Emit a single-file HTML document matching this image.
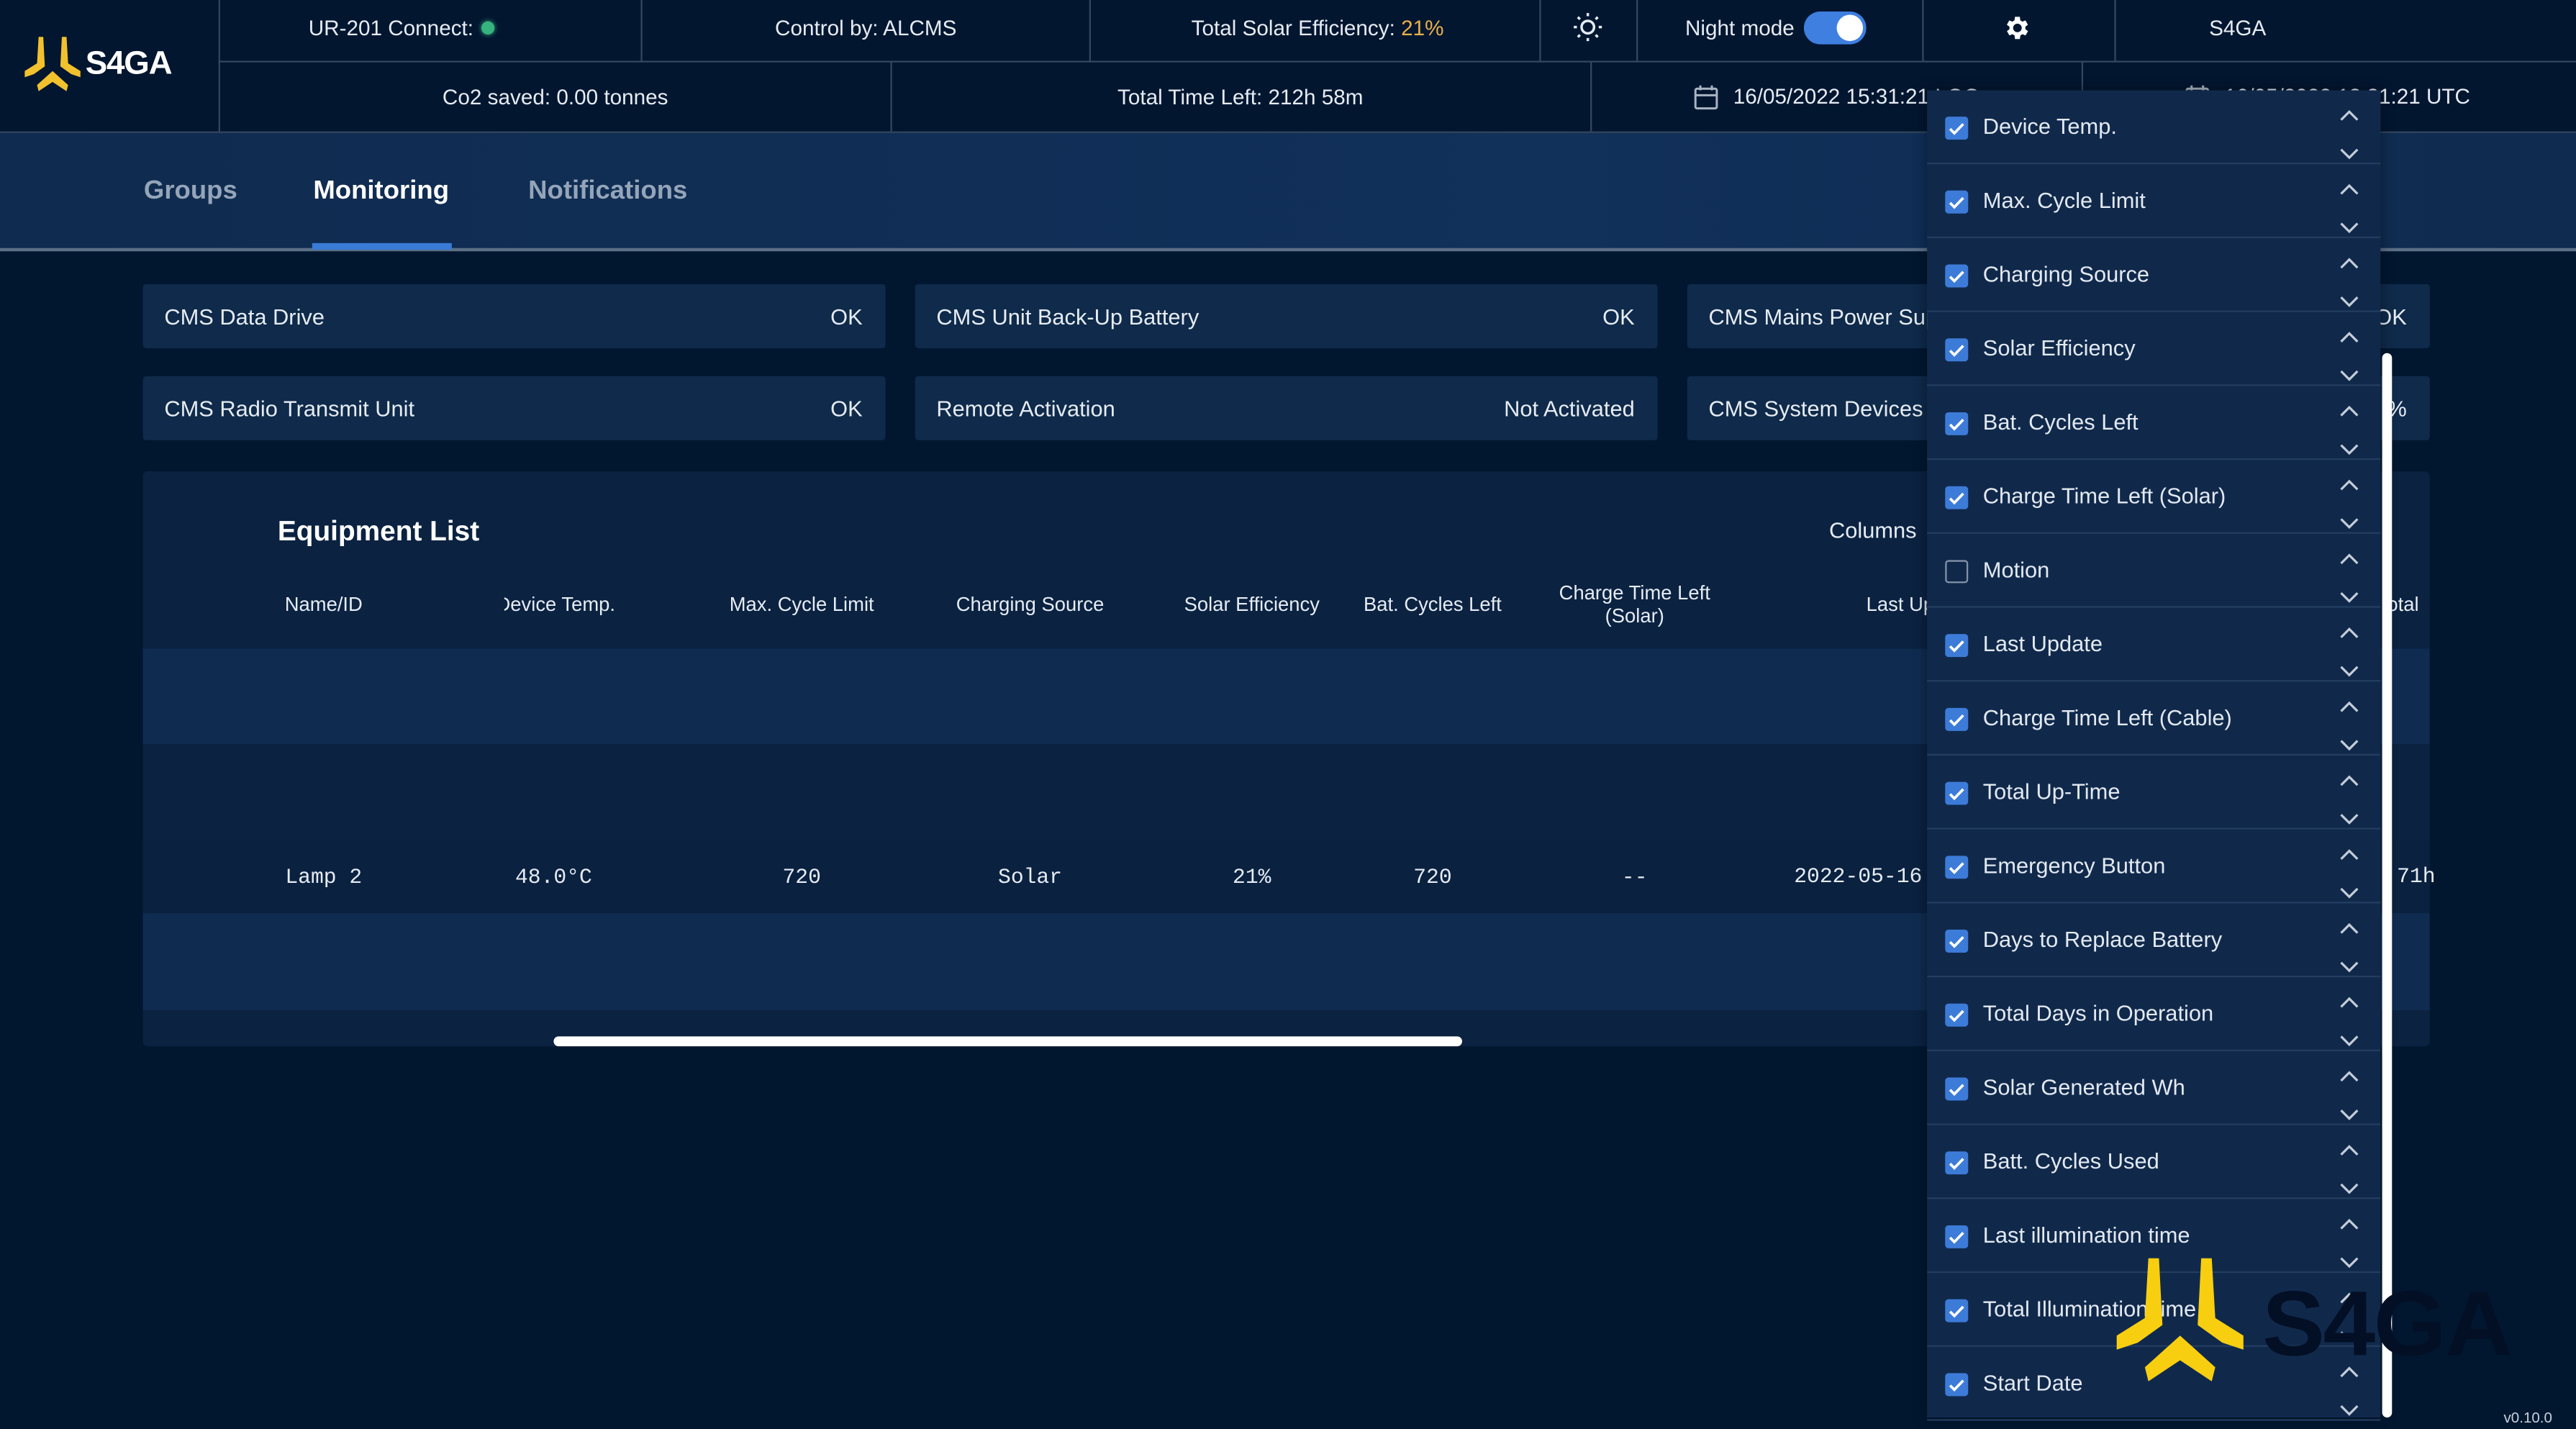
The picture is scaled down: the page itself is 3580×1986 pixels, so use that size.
<!DOCTYPE html>
<html><head><meta charset="utf-8"><style>
*{margin:0;padding:0;box-sizing:border-box}
html,body{width:3580px;height:1986px;overflow:hidden;background:#011730}
#w{position:absolute;left:0;top:0;width:1568px;height:870px;transform:scale(2.28316,2.28276);transform-origin:0 0;font-family:"Liberation Sans",sans-serif;color:#e6ecf3;background:#011730}
.a{position:absolute}
.t{position:absolute;font-size:13px;white-space:nowrap;transform:translate(-50%,-50%)}
.vl{position:absolute;width:1px;background:#33475f}
.card{position:absolute;height:39px;background:#0f2a4a;border-radius:2px;font-size:13.5px}
.card span{position:absolute;top:50%;transform:translateY(-50%)}
.mono{font-family:"Liberation Mono",monospace;font-size:13.5px}
.dd{position:absolute;left:1173px;top:55px;width:276px;height:808px;background:#10294b;box-shadow:0 0 8px rgba(0,0,0,.4)}
.row{position:absolute;left:0;width:276px;height:45px;border-bottom:1px solid #223d60}
.cb{position:absolute;left:11px;top:16px;width:14px;height:14px;background:#3d7bd8;border-radius:2px}
.cb svg{position:absolute;left:1px;top:1px}
.cbo{background:none;border:1.5px solid #8392a6}
.rl{position:absolute;left:34px;top:50%;transform:translateY(-50%);font-size:13.5px;color:#e3e9f1}
.ar{position:absolute;left:250px;width:14px;height:8px}
</style></head><body><div id="w">
<!-- header -->
<div class="a" style="left:0;top:0;width:1568px;height:80px;background:#031630"></div>
<div class="a" style="left:133px;top:37px;width:1435px;height:1px;background:#33475f"></div>
<div class="a" style="left:0;top:80px;width:1568px;height:1px;background:#33475f"></div>
<div class="vl" style="left:133px;top:0;height:80px"></div>
<div class="vl" style="left:390px;top:0;height:37px"></div>
<div class="vl" style="left:663px;top:0;height:37px"></div>
<div class="vl" style="left:937px;top:0;height:37px"></div>
<div class="vl" style="left:996px;top:0;height:37px"></div>
<div class="vl" style="left:1170px;top:0;height:37px"></div>
<div class="vl" style="left:1287px;top:0;height:37px"></div>
<div class="vl" style="left:542px;top:37px;height:43px"></div>
<div class="vl" style="left:968px;top:37px;height:43px"></div>
<div class="vl" style="left:1267px;top:37px;height:43px"></div>
<svg class="a" style="left:15px;top:22px" width="34" height="34" viewBox="0 0 36 35"><polygon points="9,0 12,0 13,19 6,24 0,26 0,22 8,17" fill="#f2c12e"/><polygon points="24,0 27,0 28,17 36,22 36,26 30,24 23,19" fill="#f2c12e"/><polygon points="18,22 28,31 27,35 18,29 9,35 8,31" fill="#f2c12e"/></svg>
<div class="a" style="left:52px;top:28px;font-size:20px;font-weight:bold;color:#fff;letter-spacing:-.5px">S4GA</div>
<div class="t" style="left:238px;top:17px">UR-201 Connect:</div>
<div class="a" style="left:293px;top:13px;width:8px;height:8px;border-radius:50%;background:#36b37e;box-shadow:0 0 3px #36b37e"></div>
<div class="t" style="left:527px;top:17px">Control by: ALCMS</div>
<div class="t" style="left:802px;top:17px">Total Solar Efficiency: <span style="color:#e8b04a">21%</span></div>
<svg class="a" style="left:957px;top:7px" width="19" height="19" viewBox="0 0 20 20" fill="none" stroke="#e6ecf3" stroke-width="1.6"><circle cx="10" cy="10" r="4"/><path d="M10 1v2M10 17v2M1 10h2M17 10h2M3.6 3.6l1.4 1.4M15 15l1.4 1.4M3.6 16.4L5 15M15 5l1.4-1.4"/></svg>
<div class="t" style="left:1059px;top:17px">Night mode</div>
<div class="a" style="left:1098px;top:7px;width:38px;height:20px;border-radius:10px;background:#3e7fe0"></div>
<div class="a" style="left:1118px;top:9px;width:16px;height:16px;border-radius:50%;background:#fff"></div>
<svg class="a" style="left:1219px;top:8px" width="18" height="18" viewBox="0 0 24 24"><path fill="#fff" d="M19.4 13a7.5 7.5 0 000-2l2.1-1.6-2-3.5-2.5 1a7.6 7.6 0 00-1.7-1L15 3h-4l-.4 2.9a7.6 7.6 0 00-1.7 1l-2.5-1-2 3.5L6.6 11a7.5 7.5 0 000 2l-2.1 1.6 2 3.5 2.5-1c.5.4 1.1.7 1.7 1L11 21h4l.4-2.9c.6-.3 1.2-.6 1.7-1l2.5 1 2-3.5zM13 15.5A3.5 3.5 0 1113 8.5a3.5 3.5 0 010 7z" transform="translate(-1,0)"/></svg>
<div class="t" style="left:1362px;top:17px">S4GA</div>
<div class="t" style="left:338px;top:59px">Co2 saved: 0.00 tonnes</div>
<div class="t" style="left:755px;top:59px">Total Time Left: 212h 58m</div>
<svg class="a" style="left:1031px;top:51px" width="15" height="16" viewBox="0 0 15 16" fill="none" stroke="#aab4c2" stroke-width="1.3"><rect x="1" y="3" width="13" height="12" rx="1"/><path d="M1 7h13M4 1v3M11 1v3"/></svg>
<div class="a" style="left:1055px;top:51px;font-size:13px">16/05/2022 15:31:21 LOC</div>
<svg class="a" style="left:1330px;top:51px" width="15" height="16" viewBox="0 0 15 16" fill="none" stroke="#aab4c2" stroke-width="1.3"><rect x="1" y="3" width="13" height="12" rx="1"/><path d="M1 7h13M4 1v3M11 1v3"/></svg>
<div class="a" style="left:1354px;top:51px;font-size:13px">16/05/2022 13:31:21 UTC</div>
<!-- tabs -->
<div class="a" style="left:0;top:81px;width:1568px;height:71px;background:linear-gradient(90deg,#0f2b4f,#11305a 60%,#0f2b4f)"></div>
<div class="a" style="left:0;top:151px;width:1568px;height:1.5px;background:#5b6f86"></div>
<div class="t" style="left:116px;top:117px;font-size:16px;font-weight:bold;color:#95a5b9">Groups</div>
<div class="t" style="left:232px;top:117px;font-size:16px;font-weight:bold;color:#fff">Monitoring</div>
<div class="t" style="left:370px;top:117px;font-size:16px;font-weight:bold;color:#95a5b9">Notifications</div>
<div class="a" style="left:190px;top:148px;width:85px;height:4px;background:#3a7bd5"></div>
<!-- cards -->
<div class="card" style="left:87px;top:173px;width:452px"><span style="left:13px">CMS Data Drive</span><span style="right:14px">OK</span></div>
<div class="card" style="left:557px;top:173px;width:452px"><span style="left:13px">CMS Unit Back-Up Battery</span><span style="right:14px">OK</span></div>
<div class="card" style="left:1027px;top:173px;width:452px"><span style="left:13px">CMS Mains Power Supply</span><span style="right:14px">OK</span></div>
<div class="card" style="left:87px;top:229px;width:452px"><span style="left:13px">CMS Radio Transmit Unit</span><span style="right:14px">OK</span></div>
<div class="card" style="left:557px;top:229px;width:452px"><span style="left:13px">Remote Activation</span><span style="right:14px">Not Activated</span></div>
<div class="card" style="left:1027px;top:229px;width:452px"><span style="left:13px">CMS System Devices</span><span style="right:14px">%</span></div>
<!-- equipment panel -->
<div class="a" style="left:87px;top:287px;width:1392px;height:350px;background:#0b2241;border-radius:3px;overflow:hidden">
 <div class="a" style="left:0;top:108px;width:1392px;height:58px;background:#0f2c50"></div>
 <div class="a" style="left:0;top:225px;width:1392px;height:44px;background:#0a2140"></div>
 <div class="a" style="left:0;top:269px;width:1392px;height:59px;background:#0f2c50"></div>
</div>
<div class="a" style="left:169px;top:314px;font-size:17px;font-weight:bold;color:#fff">Equipment List</div>
<div class="t" style="left:1140px;top:323px;font-size:13.5px">Columns</div>
<div class="t" style="left:197px;top:368px;font-size:12px">Name/ID</div>
<div class="a" style="left:307px;top:361px;font-size:12px;width:70px;overflow:hidden;white-space:nowrap"><span style="margin-left:-5px">Device Temp.</span></div>
<div class="t" style="left:488px;top:368px;font-size:12px">Max. Cycle Limit</div>
<div class="t" style="left:627px;top:368px;font-size:12px">Charging Source</div>
<div class="t" style="left:762px;top:368px;font-size:12px">Solar Efficiency</div>
<div class="t" style="left:872px;top:368px;font-size:12px">Bat. Cycles Left</div>
<div class="t" style="left:995px;top:368px;font-size:12px;text-align:center;line-height:14px">Charge Time Left<br>(Solar)</div>
<div class="a" style="left:1136px;top:361px;font-size:12px">Last Up</div>
<div class="a" style="left:1453px;top:361px;font-size:12px">otal</div>
<div class="t mono" style="left:197px;top:534px;font-size:13px">Lamp 2</div>
<div class="t mono" style="left:337px;top:534px;font-size:13px">48.0°C</div>
<div class="t mono" style="left:488px;top:534px;font-size:13px">720</div>
<div class="t mono" style="left:627px;top:534px;font-size:13px">Solar</div>
<div class="t mono" style="left:762px;top:534px;font-size:13px">21%</div>
<div class="t mono" style="left:872px;top:534px;font-size:13px">720</div>
<div class="t mono" style="left:995px;top:534px;font-size:13px">--</div>
<div class="a mono" style="left:1092px;top:526px;font-size:13px">2022-05-16</div>
<div class="a mono" style="left:1459px;top:526px;font-size:13px">71h</div>
<div class="a" style="left:337px;top:631px;width:553px;height:6px;border-radius:3px;background:#fff"></div>
<!-- dropdown -->
<div class="dd" id="dd"></div>
<div class="a" style="left:1450px;top:215px;width:6px;height:648px;background:#fff;border-radius:3px"></div>
<!-- big logo -->
<svg class="a" style="left:1283px;top:766px" width="88" height="75" viewBox="0 0 36 35"><polygon points="9,0 12,0 13,19 6,24 0,26 0,22 8,17" fill="#f8cf10"/><polygon points="24,0 27,0 28,17 36,22 36,26 30,24 23,19" fill="#f8cf10"/><polygon points="18,22 28,31 27,35 18,29 9,35 8,31" fill="#f8cf10"/></svg>
<div class="a" style="left:1377px;top:778px;font-size:56px;font-weight:bold;color:#030f24;letter-spacing:-1px;line-height:1;transform:scaleX(1.02);transform-origin:0 0">S4GA</div>
<div class="a" style="left:1524px;top:858px;font-size:9px;color:#c9d1dc">v0.10.0</div>
<script>
var items=["Device Temp.","Max. Cycle Limit","Charging Source","Solar Efficiency","Bat. Cycles Left","Charge Time Left (Solar)","Motion","Last Update","Charge Time Left (Cable)","Total Up-Time","Emergency Button","Days to Replace Battery","Total Days in Operation","Solar Generated Wh","Batt. Cycles Used","Last illumination time","Total Illumination time","Start Date"];
var h="";
var chk='<svg width="12" height="12" viewBox="0 0 12 12"><path d="M2 6.5l2.6 2.6L10 3.5" fill="none" stroke="#fff" stroke-width="1.6"/></svg>';
var up='<svg width="14" height="8" viewBox="0 0 14 8"><path d="M2 7l5-5 5 5" fill="none" stroke="#c4cdd8" stroke-width="1.4"/></svg>';
var dn='<svg width="14" height="8" viewBox="0 0 14 8"><path d="M2 1l5 5 5-5" fill="none" stroke="#c4cdd8" stroke-width="1.4"/></svg>';
for(var i=0;i<items.length;i++){
 h+='<div class="row" style="top:'+(i*45)+'px">'+(i==6?'<div class="cb cbo"></div>':'<div class="cb">'+chk+'</div>')+'<div class="rl">'+items[i]+'</div><div class="ar" style="top:6px">'+up+'</div><div class="ar" style="top:30px">'+dn+'</div></div>';
}
document.getElementById("dd").innerHTML=h;
</script>
</div></body></html>
